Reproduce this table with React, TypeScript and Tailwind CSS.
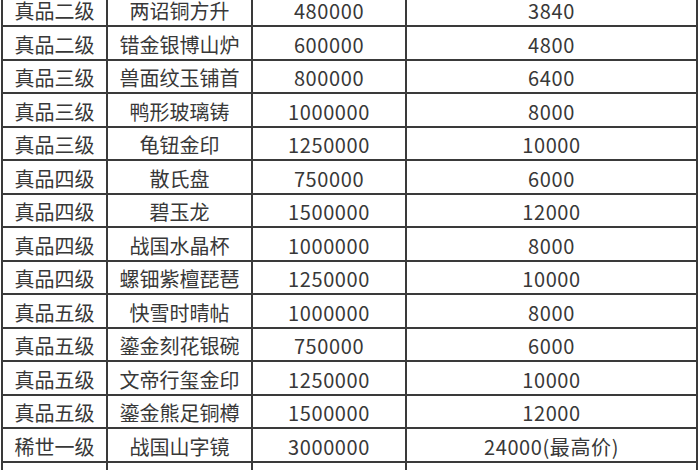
const rows: [string, string, string, string][] = [
  ['真品二级', '两诏铜方升', '480000', '3840'],
  ['真品二级', '错金银博山炉', '600000', '4800'],
  ['真品三级', '兽面纹玉铺首', '800000', '6400'],
  ['真品三级', '鸭形玻璃铸', '1000000', '8000'],
  ['真品三级', '龟钮金印', '1250000', '10000'],
  ['真品四级', '散氏盘', '750000', '6000'],
  ['真品四级', '碧玉龙', '1500000', '12000'],
  ['真品四级', '战国水晶杯', '1000000', '8000'],
  ['真品四级', '螺钿紫檀琵琶', '1250000', '10000'],
  ['真品五级', '快雪时晴帖', '1000000', '8000'],
  ['真品五级', '鎏金刻花银碗', '750000', '6000'],
  ['真品五级', '文帝行玺金印', '1250000', '10000'],
  ['真品五级', '鎏金熊足铜樽', '1500000', '12000'],
  ['稀世一级', '战国山字镜', '3000000', '24000(最高价)'],
  ['稀世一级', '曾侯乙编钟', '3000000', '24000(最高价)'],
];

export default function App() {
  return (
    <div className="w-[700px] h-[470px] overflow-hidden bg-white">
      <div
        className="ml-px mt-[-6.5px] w-[697px] border-x-2 border-[#3a3a3a] text-[20px] text-[#383838]"
        style={{ fontFamily: '"Noto Sans CJK SC", "Noto Sans", sans-serif' }}
      >
        {rows.map((r, i) => (
          <div
            key={i}
            className="grid grid-cols-[105px_145px_154px_1fr] h-[33.5px] border-b-2 border-[#3a3a3a]"
          >
            {r.map((c, j) => (
              <div
                key={j}
                className={`flex items-center justify-center pt-[4px] leading-none ${j < 3 ? 'border-r-2 border-[#3a3a3a]' : ''} ${j >= 2 ? 'tracking-[0.6px]' : ''}`}
              >
                {c}
              </div>
            ))}
          </div>
        ))}
      </div>
    </div>
  );
}
